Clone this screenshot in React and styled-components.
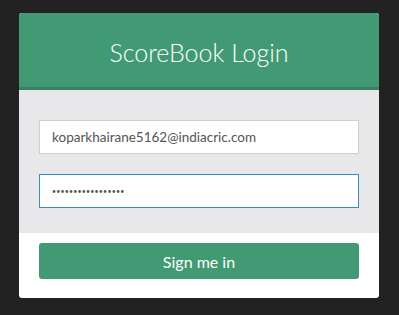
import styled, { createGlobalStyle } from 'styled-components'

const GlobalStyle = createGlobalStyle`
    body {
        margin: 0;
        background: #222222;
        font-family: Lato, "Open Sans", sans-serif;
    }
`

function App() {
    return (
        <>
            <GlobalStyle />
            <Page>
                <Card>
                    <Header>
                        <Title>ScoreBook Login</Title>
                    </Header>
                    <Body>
                        <Input type="email" defaultValue="koparkhairane5162@indiacric.com" />
                        <Input type="password" defaultValue="koparkhairane5162" focused masked />
                    </Body>
                    <Footer>
                        <Button>Sign me in</Button>
                    </Footer>
                </Card>
            </Page>
        </>
    )
}

export default App

const Page = styled.div`
    height: 315px;
    padding: 13px 20px 0 19px;
    box-sizing: border-box;
`

const Card = styled.div`
    width: 360px;
    background: #ffffff;
    border-radius: 3px;
    overflow: hidden;
`

const Header = styled.div`
    height: 74px;
    background: #419a73;
    border-bottom: 3px solid #3a8063;
    display: flex;
    align-items: center;
    justify-content: center;
`

const Title = styled.h3`
    margin: 0;
    padding-top: 3px;
    color: #ffffff;
    font-weight: 300;
    font-size: 25px;
`

const Body = styled.div`
    background: #e8e8ea;
    padding: 30px 20px 25px;
    display: flex;
    flex-direction: column;
    gap: 20px;
`

const Input = styled.input.withConfig({
    shouldForwardProp: p => p !== 'focused' && p !== 'masked'
})`
    height: 34px;
    box-sizing: border-box;
    padding: 0 12px;
    border: 1px solid ${p => (p.focused ? '#3c8dbc' : '#cfcfd2')};
    background: #ffffff;
    color: #555555;
    font-family: Lato, sans-serif;
    font-size: ${p => (p.masked ? '7px' : '13.5px')};
    letter-spacing: ${p => (p.masked ? '0.2px' : '0')};
    outline: none;
    border-radius: 0;
`

const Footer = styled.div`
    padding: 10px 20px 19px;
`

const Button = styled.button`
    width: 100%;
    height: 36px;
    border: none;
    border-radius: 3px;
    background: #419a73;
    color: #ffffff;
    font-family: Lato, sans-serif;
    font-size: 16px;
    cursor: pointer;
`
